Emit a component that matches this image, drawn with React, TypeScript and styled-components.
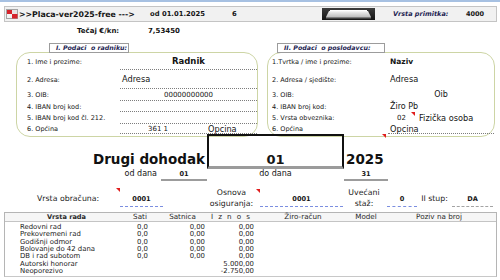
import styled, { createGlobalStyle } from "styled-components";

const GlobalStyle = createGlobalStyle`
  html, body {
    margin: 0;
    padding: 0;
    background: #ffffff;
  }
  body {
    font-family: "DejaVu Sans", Verdana, sans-serif;
    color: #151515;
  }
  * {
    box-sizing: border-box;
  }
`;

const Page = styled.div`
  width: 500px;
  height: 280px;
  overflow: hidden;
  border-top: 2px solid #a7c1e2;
`;

/* ---------- top toolbar ---------- */

const Toolbar = styled.div`
  display: flex;
  align-items: center;
  height: 16px;
  margin: 4px 3px 0 4px;
  padding-left: 1px;
  background: #f1f1f1;
  border: 1px solid #c4c4c4;
`;

const BarItem = styled.span<{
  $w?: number;
  $bold?: boolean;
  $italic?: boolean;
  $size?: number;
  $color?: string;
}>`
  flex: none;
  display: flex;
  align-items: center;
  width: ${({ $w }) => ($w ? `${$w}px` : "auto")};
  font-size: ${({ $size }) => $size ?? 7}px;
  font-weight: ${({ $bold }) => ($bold ? 700 : 400)};
  font-style: ${({ $italic }) => ($italic ? "italic" : "normal")};
  color: ${({ $color }) => $color ?? "#151515"};
  white-space: nowrap;
`;

const RateRow = styled.div`
  display: flex;
  align-items: center;
  height: 17px;
  padding-left: 77px;
`;

/* ---------- panels ---------- */

const PanelsRow = styled.div`
  display: grid;
  grid-template-columns: 242px 228px;
  column-gap: 9px;
  margin-top: 4px;
  padding-left: 16px;
`;

const Panel = styled.section`
  display: flex;
  flex-direction: column;
`;

const PanelTab = styled.div<{ $offset: number; $w: number }>`
  position: relative;
  z-index: 1;
  width: ${({ $w }) => $w}px;
  height: 10px;
  margin-left: ${({ $offset }) => $offset}px;
  padding-left: 6px;
  border: 1px solid #9c9c9c;
  background: #ffffff;
  font-size: 6.3px;
  font-weight: 700;
  font-style: italic;
  line-height: 8px;
  color: #1d2452;
  white-space: pre;
`;

const PanelBox = styled.div<{ $labelW: number; $padL: number }>`
  display: grid;
  grid-template-columns: ${({ $labelW }) => $labelW}px 1fr;
  grid-template-rows: 17px 19px 12px 11px 12px 10px;
  margin-top: -1px;
  padding: 0 0 2px ${({ $padL }) => $padL}px;
  border: 1px solid #cdd5a5;
  border-radius: 14px;
`;

const FieldLabel = styled.div`
  position: relative;
  display: flex;
  align-items: center;
  font-size: 6.5px;
  white-space: nowrap;
`;

const FieldValue = styled.div<{
  $center?: boolean;
  $size?: number;
  $bold?: boolean;
  $lined?: boolean;
  $pl?: number;
}>`
  position: relative;
  display: flex;
  align-items: center;
  justify-content: ${({ $center }) => ($center ? "center" : "flex-start")};
  padding-left: ${({ $center, $pl }) => ($center ? 0 : $pl ?? 2)}px;
  border-bottom: 1px dotted
    ${({ $lined }) => ($lined ? "#7d7d7d" : "transparent")};
  font-size: ${({ $size }) => $size ?? 8.2}px;
  font-weight: ${({ $bold }) => ($bold ? 700 : 400)};
  white-space: nowrap;
`;

const SubValue = styled.span<{ $w?: number; $pl?: number; $center?: boolean; $size?: number }>`
  position: relative;
  display: inline-block;
  width: ${({ $w }) => ($w ? `${$w}px` : "auto")};
  padding-left: ${({ $pl }) => $pl ?? 0}px;
  text-align: ${({ $center }) => ($center ? "center" : "left")};
  font-size: ${({ $size }) => ($size ? `${$size}px` : "inherit")};
`;

const Marker = styled.span<{ $top: number; $right: number }>`
  position: absolute;
  top: ${({ $top }) => $top}px;
  right: ${({ $right }) => $right}px;
  width: 0;
  height: 0;
  border-top: 4px solid #e01e1e;
  border-left: 4px solid transparent;
`;

/* ---------- title ---------- */

const TitleRow = styled.div`
  position: relative;
  display: grid;
  grid-template-columns: 207px 137px auto;
  align-items: end;
  margin-top: -3px;
`;

const BigText = styled.div<{ $right?: boolean }>`
  margin-bottom: 3px;
  padding: ${({ $right }) => ($right ? "0 2px 0 0" : "0 0 0 2px")};
  text-align: ${({ $right }) => ($right ? "right" : "left")};
  font-size: 13.5px;
  font-weight: 700;
  line-height: 13px;
  color: #111111;
`;

const MonthBox = styled.div`
  display: flex;
  align-items: flex-end;
  justify-content: center;
  height: 35px;
  border: 2px solid #111111;
  border-bottom: 3px solid #9b9b9b;
  font-size: 13px;
  font-weight: 700;
  line-height: 13px;
`;

const DateRow = styled.div`
  display: grid;
  grid-template-columns: 161px 46px 137px 44px;
  height: 12px;
`;

const DateLabel = styled.div<{ $center?: boolean }>`
  padding-right: ${({ $center }) => ($center ? 0 : 4)}px;
  text-align: ${({ $center }) => ($center ? "center" : "right")};
  font-size: 8px;
  line-height: 10px;
`;

const DateValue = styled.div`
  border-bottom: 2px solid #9c9c9c;
  text-align: center;
  font-size: 6.6px;
  font-weight: 700;
  line-height: 10px;
`;

/* ---------- parameters ---------- */

const ParamsRow = styled.div`
  display: flex;
  margin-top: 3px;
  height: 23px;
`;

const ParamLabel = styled.div<{ $w: number; $ml?: number; $center?: boolean }>`
  position: relative;
  flex: none;
  display: flex;
  align-items: center;
  justify-content: ${({ $center }) => ($center ? "center" : "flex-start")};
  width: ${({ $w }) => $w}px;
  margin-left: ${({ $ml }) => $ml ?? 0}px;
  padding-top: 5px;
  text-align: center;
  font-size: 7.8px;
  line-height: 11px;
  color: #1c1c1c;
  white-space: nowrap;
`;

const ParamValue = styled.div<{ $w: number; $ml?: number; $line: string }>`
  flex: none;
  display: flex;
  align-items: flex-end;
  justify-content: center;
  width: ${({ $w }) => $w}px;
  margin-left: ${({ $ml }) => $ml ?? 0}px;
  padding-bottom: 2px;
  border-bottom: 1px dashed ${({ $line }) => $line};
  font-size: 6.6px;
  font-weight: 700;
  line-height: 9px;
`;

/* ---------- table ---------- */

const tableCols = "123px 30px 49px 49px 94px 32px 114px";

const Table = styled.div`
  margin: 5px 3px 0 4px;
  border: 1px solid #b5b5b5;
  border-bottom-color: #c8c8c8;
`;

const HeaderRow = styled.div`
  display: grid;
  grid-template-columns: ${tableCols};
  height: 9px;
  background: #f6f6f6;
  border-bottom: 1px solid #c4c4c4;
`;

const HeaderCell = styled.div<{ $bold?: boolean; $align?: "left" | "center"; $pl?: number; $pr?: number }>`
  padding-left: ${({ $pl }) => $pl ?? 0}px;
  padding-right: ${({ $pr }) => $pr ?? 0}px;
  text-align: ${({ $align }) => $align ?? "center"};
  font-size: ${({ $bold }) => ($bold ? 6.6 : 7.2)}px;
  font-weight: ${({ $bold }) => ($bold ? 700 : 400)};
  letter-spacing: ${({ $pl }) => ($pl ? "1.4px" : "0")};
  line-height: 8px;
  color: #2a2a2a;
  white-space: nowrap;
`;

const TableBody = styled.div`
  display: grid;
  grid-auto-rows: 7.35px;
  padding: 2px 0 1px;
`;

const TableRow = styled.div`
  display: grid;
  grid-template-columns: ${tableCols};
  font-size: 6.9px;
  line-height: 7.35px;
  color: #222222;
  white-space: nowrap;
`;

const RowName = styled.div`
  padding-left: 15px;
`;

const Num = styled.div<{ $pr?: number }>`
  padding-right: ${({ $pr }) => $pr ?? 2}px;
  text-align: right;
`;

/* ---------- drawings ---------- */

const Flag = () => (
  <svg width="12" height="10" viewBox="0 0 12 10">
    <rect x="0.5" y="0.5" width="11" height="9" fill="#f4f4f4" stroke="#a4a4a4" />
    <rect x="1" y="1" width="5" height="4" fill="#d6232b" />
    <rect x="6" y="5" width="5.5" height="4.5" fill="#d6232b" />
    <rect x="6" y="1" width="5" height="4" fill="#e9e3e3" />
  </svg>
);

const Thumb = () => (
  <svg width="53" height="12" viewBox="0 0 53 12">
    <defs>
      <linearGradient id="thumbBg" x1="0" y1="0" x2="0" y2="1">
        <stop offset="0" stopColor="#3c3c3c" />
        <stop offset="1" stopColor="#141414" />
      </linearGradient>
      <linearGradient id="thumbSlab" x1="0" y1="0" x2="0" y2="1">
        <stop offset="0" stopColor="#f4f4f4" />
        <stop offset="1" stopColor="#bdbdbd" />
      </linearGradient>
    </defs>
    <rect width="53" height="12" fill="url(#thumbBg)" />
    <path d="M7 3 H46 L49 9 H4 Z" fill="url(#thumbSlab)" />
    <rect x="8" y="2" width="37" height="1.2" fill="#ffffff" />
    <rect x="4" y="9" width="45" height="1.4" fill="#7d7d7d" />
  </svg>
);

const rows = [
  { name: "Redovni rad", sati: "0,0", satnica: "0,00", iznos: "0,00" },
  { name: "Prekovremeni rad", sati: "0,0", satnica: "0,00", iznos: "0,00" },
  { name: "Godišnji odmor", sati: "0,0", satnica: "0,00", iznos: "0,00" },
  { name: "Bolovanje do 42 dana", sati: "0,0", satnica: "0,00", iznos: "0,00" },
  { name: "DB i rad subotom", sati: "0,0", satnica: "0,00", iznos: "0,00" },
  { name: "Autorski honorar", sati: "", satnica: "", iznos: "5.000,00" },
  { name: "Neoporezivo", sati: "", satnica: "", iznos: "-2.750,00" },
];

const App = () => {
  return (
    <Page>
      <GlobalStyle />

      <Toolbar>
        <BarItem $w={13}>
          <Flag />
        </BarItem>
        <BarItem $w={131} $bold $size={7.8}>
          &gt;&gt;Placa-ver2025-free ---&gt;
        </BarItem>
        <BarItem $w={82} $bold $size={6.8}>
          od 01.01.2025
        </BarItem>
        <BarItem $w={90} $bold $size={6.8}>
          6
        </BarItem>
        <BarItem $w={71}>
          <Thumb />
        </BarItem>
        <BarItem $w={73} $bold $italic $size={6.5} $color="#1d2452">
          Vrsta primitka:
        </BarItem>
        <BarItem $bold $size={6.5}>
          4000
        </BarItem>
      </Toolbar>

      <RateRow>
        <BarItem $w={71} $bold>
          Tečaj €/kn:
        </BarItem>
        <BarItem $bold>7,53450</BarItem>
      </RateRow>

      <PanelsRow>
        <Panel>
          <PanelTab $offset={33} $w={80}>
            {"I. Podaci  o radniku:"}
          </PanelTab>
          <PanelBox $labelW={93} $padL={10}>
            <FieldLabel>1. Ime i prezime:</FieldLabel>
            <FieldValue $lined $center $bold $size={8.5}>
              Radnik
            </FieldValue>
            <FieldLabel>2. Adresa:</FieldLabel>
            <FieldValue $lined>Adresa</FieldValue>
            <FieldLabel>3. OIB:</FieldLabel>
            <FieldValue $lined $center $size={7}>
              00000000000
            </FieldValue>
            <FieldLabel>4. IBAN broj kod:</FieldLabel>
            <FieldValue $lined />
            <FieldLabel>5. IBAN broj kod čl. 212.</FieldLabel>
            <FieldValue $lined />
            <FieldLabel>6. Općina</FieldLabel>
            <FieldValue $lined $pl={0}>
              <SubValue $w={76} $center $size={7}>
                361 1
              </SubValue>
              <SubValue $pl={12}>Opcina</SubValue>
            </FieldValue>
          </PanelBox>
        </Panel>

        <Panel>
          <PanelTab $offset={10} $w={108}>
            {"II. Podaci  o poslodavcu:"}
          </PanelTab>
          <PanelBox $labelW={116} $padL={4}>
            <FieldLabel>1.Tvrtka / ime i prezime:</FieldLabel>
            <FieldValue $bold $size={7.5}>
              Naziv
            </FieldValue>
            <FieldLabel>2. Adresa / sjedište:</FieldLabel>
            <FieldValue>Adresa</FieldValue>
            <FieldLabel>3. OIB:</FieldLabel>
            <FieldValue $center $size={8}>
              Oib
            </FieldValue>
            <FieldLabel>4. IBAN broj kod:</FieldLabel>
            <FieldValue $size={8}>Žiro Pb</FieldValue>
            <FieldLabel>5. Vrsta obveznika:</FieldLabel>
            <FieldValue $pl={0}>
              <SubValue $w={27} $pl={9} $size={7}>
                02
                <Marker $top={-2} $right={0} />
              </SubValue>
              <SubValue $pl={4}>Fizička osoba</SubValue>
            </FieldValue>
            <FieldLabel>
              6. Općina
              <Marker $top={10} $right={2} />
            </FieldLabel>
            <FieldValue $lined>Opcina</FieldValue>
          </PanelBox>
        </Panel>
      </PanelsRow>

      <TitleRow>
        <BigText $right>Drugi dohodak</BigText>
        <MonthBox>01</MonthBox>
        <BigText>2025</BigText>
      </TitleRow>

      <DateRow>
        <DateLabel>od dana</DateLabel>
        <DateValue>01</DateValue>
        <DateLabel $center>do dana</DateLabel>
        <DateValue>31</DateValue>
      </DateRow>

      <ParamsRow>
        <ParamLabel $w={83} $ml={37}>
          Vrsta obračuna:
          <Marker $top={4} $right={0} />
        </ParamLabel>
        <ParamValue $w={43} $line="#7b8ee0">
          0001
        </ParamValue>
        <ParamLabel $w={53} $ml={42} $center>
          Osnova
          <br />
          osiguranja:
          <Marker $top={5} $right={-2} />
        </ParamLabel>
        <ParamValue $w={83} $ml={2} $line="#7b8ee0">
          0001
        </ParamValue>
        <ParamLabel $w={42} $center>
          Uvećani
          <br />
          staž:
        </ParamLabel>
        <ParamValue $w={30} $ml={2} $line="#7b8ee0">
          0
        </ParamValue>
        <ParamLabel $w={35} $center>
          II stup:
        </ParamLabel>
        <ParamValue $w={41} $line="#a3a3a3">
          DA
        </ParamValue>
      </ParamsRow>

      <Table>
        <HeaderRow>
          <HeaderCell $bold>Vrsta rada</HeaderCell>
          <HeaderCell $pr={6}>Sati</HeaderCell>
          <HeaderCell>Satnica</HeaderCell>
          <HeaderCell $align="left" $pl={4}>
            I z n o s
          </HeaderCell>
          <HeaderCell>Žiro-račun</HeaderCell>
          <HeaderCell>Model</HeaderCell>
          <HeaderCell>Poziv na broj</HeaderCell>
        </HeaderRow>
        <TableBody>
          {rows.map((row, index) => {
            return (
              <TableRow key={index}>
                <RowName>{row.name}</RowName>
                <Num $pr={10}>{row.sati}</Num>
                <Num>{row.satnica}</Num>
                <Num>{row.iznos}</Num>
                <div />
                <div />
                <div />
              </TableRow>
            );
          })}
        </TableBody>
      </Table>
    </Page>
  );
};

export default App;
